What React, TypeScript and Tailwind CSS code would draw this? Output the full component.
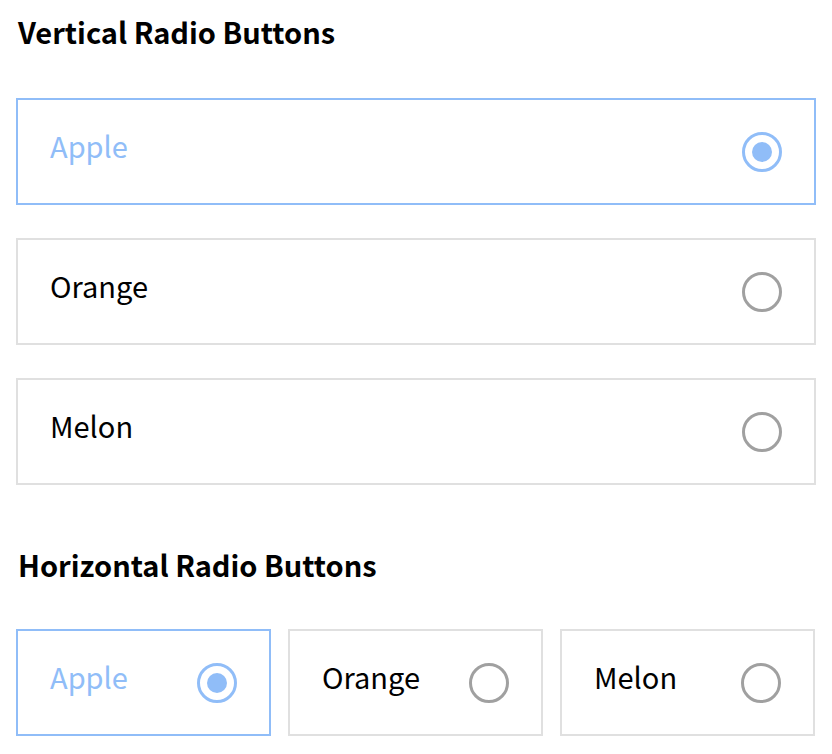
import { useState } from 'react';

const FRUITS = ['Apple', 'Orange', 'Melon'];

function RadioMark({ checked }: { checked: boolean }) {
  return (
    <svg width="40" height="40" viewBox="0 0 40 40" className="shrink-0">
      <circle
        cx="20"
        cy="20"
        r="18.5"
        fill="none"
        stroke={checked ? '#90bdf8' : '#a0a0a0'}
        strokeWidth="3"
      />
      {checked && <circle cx="20" cy="20" r="10" fill="#90bdf8" />}
    </svg>
  );
}

function Option({
  label,
  checked,
  onSelect,
  className,
}: {
  label: string;
  checked: boolean;
  onSelect: () => void;
  className?: string;
}) {
  return (
    <label
      onClick={onSelect}
      className={
        'flex h-[107px] cursor-pointer items-center justify-between border-2 pl-[32px] pr-[32px] ' +
        (checked ? 'border-[#90bdf8] text-[#90bdf8] ' : 'border-[#e0e0e0] text-black ') +
        (className || '')
      }
    >
      <span className="-mt-[12px] text-[29px] leading-none">{label}</span>
      <RadioMark checked={checked} />
    </label>
  );
}

export default function App() {
  const [vertical, setVertical] = useState('Apple');
  const [horizontal, setHorizontal] = useState('Apple');

  return (
    <div
      className="min-h-screen bg-white px-[16px] pt-[12px] text-black"
      style={{ fontFamily: '"Noto Sans CJK KR", "Noto Sans", sans-serif' }}
    >
      {/* Vertical */}
      <h2 className="pl-[2px] text-[29px] font-bold leading-[38px]">Vertical Radio Buttons</h2>
      <div className="mt-[48px] flex flex-col gap-[33px]">
        {FRUITS.map((f) => (
          <Option key={f} label={f} checked={vertical === f} onSelect={() => setVertical(f)} />
        ))}
      </div>

      {/* Horizontal */}
      <h2 className="mt-[60px] pl-[2px] text-[29px] font-bold leading-[38px]">
        Horizontal Radio Buttons
      </h2>
      <div className="mt-[46px] flex w-[799px] gap-[17px]">
        {FRUITS.map((f) => (
          <Option
            key={f}
            label={f}
            checked={horizontal === f}
            onSelect={() => setHorizontal(f)}
            className="w-[255px]"
          />
        ))}
      </div>
    </div>
  );
}
